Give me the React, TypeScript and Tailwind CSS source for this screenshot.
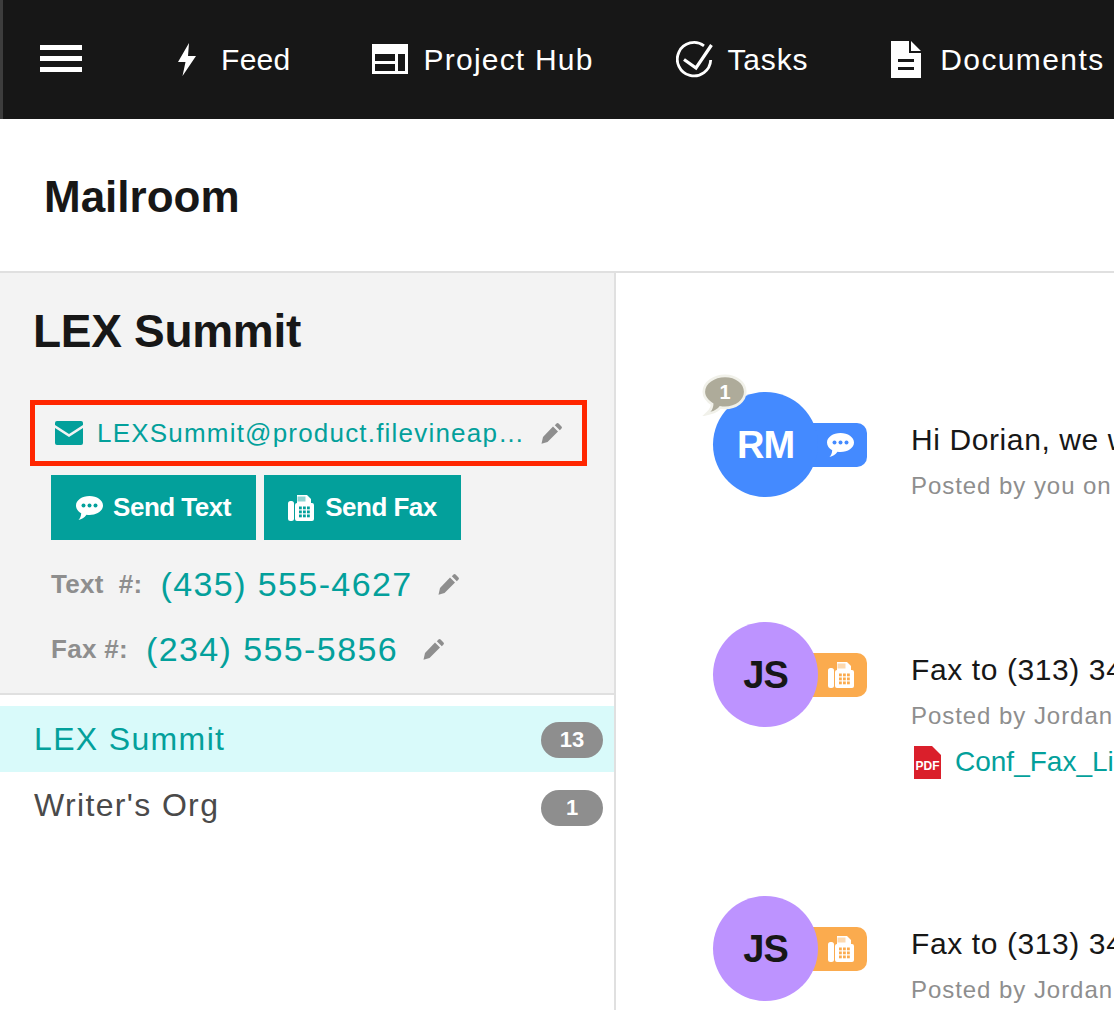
import React from 'react';

const font = { fontFamily: '"Liberation Sans", Arial, sans-serif' };

const Bolt = () => (
  <svg viewBox="0 0 20 33" className="w-[20px] h-[33px] fill-white">
    <path d="M12 0 1 19h7.500L5.500 33 19 13h-8z" />
  </svg>
);

const HubIcon = () => (
  <svg viewBox="0 0 36 30" className="w-[36px] h-[30px]">
    <path fill="#fff" fillRule="evenodd" d="M0 0h36v30H0zM3 10v7h20v-7zM3 20v7h20v-7zM26 10v17h7V10z" />
  </svg>
);

const CheckCircle = () => (
  <svg viewBox="0 0 37 37" className="w-[37px] h-[37px] fill-none stroke-white">
    <path strokeWidth="2.800" d="M28 4.800A16.700 16.700 0 1 0 34.700 19" />
    <path strokeWidth="3.200" d="M8 18.500l12 8.500L35.500 4" />
  </svg>
);

const DocIcon = () => (
  <svg viewBox="0 0 30 37" className="w-[30px] h-[37px]">
    <path fill="#fff" d="M0 0h18v12h12v25H0zM20 0l10 10H20z" />
    <path fill="#171717" d="M7 18h16v3H7zM7 26h16v3H7z" />
  </svg>
);

const MailIcon = () => (
  <svg viewBox="0 0 28 24" className="w-[28px] h-[24px] fill-[#03a09b]">
    <path d="M2 0h24a2 2 0 0 1 2 2v2L14 13 0 4V2a2 2 0 0 1 2-2z" />
    <path d="M0 7l14 9 14-9v15a2 2 0 0 1-2 2H2a2 2 0 0 1-2-2z" />
  </svg>
);

const Pencil = () => (
  <svg viewBox="0 0 22 22" className="w-[22px] h-[22px] fill-[#8e8e8e]">
    <path d="M15.500 1.500a1.500 1.500 0 0 1 2.100 0l2.900 2.900a1.500 1.500 0 0 1 0 2.100l-1.700 1.700-5-5zM12 4.500l5 5L6.500 20l-6 1.800L2 15z" />
  </svg>
);

const ChatIcon = ({ className, dot }: { className: string; dot: string }) => (
  <svg viewBox="0 0 27 24" className={className}>
    <path fill="#fff" d="M13.500 0C20.900 0 27 4.200 27 9.500S20.900 19 13.500 19c-1 0-2-.1-3-.2C8.500 21.500 5.500 23.500 2.500 24c1.500-1.500 2.500-3.700 2.700-6.800C2 15.500 0 12.700 0 9.500 0 4.200 6.100 0 13.500 0z" />
    <circle cx="7.500" cy="9.500" r="2" fill={dot} />
    <circle cx="13.500" cy="9.500" r="2" fill={dot} />
    <circle cx="19.500" cy="9.500" r="2" fill={dot} />
  </svg>
);

const FaxIcon = ({ className, hole }: { className: string; hole: string }) => (
  <svg viewBox="0 0 26 26" className={className}>
    <rect x="0" y="6" width="6" height="20" rx="2.500" fill="#fff" />
    <path fill="#fff" d="M9 0h10l4 4v4h1a2 2 0 0 1 2 2v14a2 2 0 0 1-2 2H9a2 2 0 0 1-2-2V10a2 2 0 0 1 2-2z" />
    <path fill={hole} d="M9.500 1.500h8v5h-8z" opacity="0.450" />
    {[11.500, 15.500, 19.500].map((y) =>
      [11, 15, 19].map((x) => <rect key={`${x}-${y}`} x={x} y={y} width="2.800" height="2.800" fill={hole} />),
    )}
  </svg>
);

const NavItem = ({ icon, label, gap, left, spacing }: { icon: React.ReactNode; label: string; gap: string; left: string; spacing: string }) => (
  <div className={`flex items-center ${left} ${gap}`}>
    {icon}
    <span className={`text-[30px] text-white leading-none whitespace-nowrap mt-[2px] ${spacing}`}>{label}</span>
  </div>
);

const Avatar = ({ initials, circle, tag, text, icon }: { initials: string; circle: string; tag: string; text: string; icon: React.ReactNode }) => (
  <div className="relative flex items-start shrink-0 w-[154px] h-[106px]">
    <div className={`absolute left-[90px] top-[31px] w-[64px] h-[44px] rounded-[10px] flex items-center justify-end pr-[13px] ${tag}`}>
      {icon}
    </div>
    <div className={`relative w-[105px] h-[105px] pt-[2px] rounded-full flex items-center justify-center text-[38px] font-bold tracking-[-1px] ${circle} ${text}`}>
      {initials}
    </div>
  </div>
);

const Message = ({ avatar, title, sub, file, top }: { avatar: React.ReactNode; title: string; sub: string; file?: string; top: string }) => (
  <div className={`flex ${top} relative`}>
    {avatar}
    <div className="ml-[44px] pt-[29px] whitespace-nowrap">
      <div className="text-[30px] leading-[38px] text-[#171717] tracking-[0.600px]">{title}</div>
      <div className="mt-[12px] text-[24px] leading-[30px] text-[#8e8e8e] tracking-[0.950px]">{sub}</div>
      {file && (
        <div className="mt-[14px] flex items-center gap-[14px] pl-[3px]">
          <svg viewBox="0 0 27 33" className="w-[27px] h-[33px]">
            <path fill="#da1f2b" d="M0 0h18l9 9v24H0z" />
            <text x="13.500" y="24" textAnchor="middle" fontSize="12" fontWeight="700" fill="#fff" fontFamily="Liberation Sans">PDF</text>
          </svg>
          <span className="text-[28px] leading-[34px] text-[#03a09b]">{file}</span>
        </div>
      )}
    </div>
  </div>
);

const PhoneRow = ({ label, number, mt }: { label: string; number: string; mt: string }) => (
  <div className={`flex items-center pl-[51px] gap-[18px] ${mt}`}>
    <span className="text-[26px] font-bold text-[#8e8e8e] leading-none whitespace-pre tracking-[0.300px]">{label}</span>
    <span className="text-[34px] text-[#03a09b] leading-none tracking-[1.400px] mr-[7px]">{number}</span>
    <Pencil />
  </div>
);

const OrgRow = ({ name, count, active }: { name: string; count: number; active?: boolean }) => (
  <div className={`flex items-center justify-between h-[66px] pl-[34px] pr-[11px] ${active ? 'bg-[#d9fafa] text-[#03a09b]' : 'text-[#4a4a4a]'}`}>
    <span className="text-[32px] tracking-[1.350px] leading-none">{name}</span>
    <span className={`w-[62px] h-[36px] rounded-full bg-[#8e8e8e] text-white font-bold text-[22px] flex items-center justify-center ${active ? 'mt-[1px]' : 'mt-[5px]'}`}>{count}</span>
  </div>
);

export default function App() {
  return (
    <div style={font} className="w-[1114px] h-[1010px] overflow-hidden bg-white flex flex-col">
      <nav className="h-[119px] shrink-0 bg-[#171717] border-l-[3px] border-[#3d3d3d] flex items-center pl-[37px] pb-[1px] overflow-hidden">
        <div className="w-[42px] h-[27px] flex flex-col justify-between shrink-0 -mt-[1px]">
          <div className="h-[5px] bg-white" />
          <div className="h-[5px] bg-white" />
          <div className="h-[5px] bg-white" />
        </div>
        <NavItem icon={<Bolt />} label="Feed" gap="gap-[24px]" left="ml-[95px]" spacing="tracking-[0.300px]" />
        <NavItem icon={<HubIcon />} label="Project Hub" gap="gap-[16px]" left="ml-[81px]" spacing="tracking-[1.200px]" />
        <NavItem icon={<CheckCircle />} label="Tasks" gap="gap-[15px]" left="ml-[82px]" spacing="tracking-[0.800px]" />
        <NavItem icon={<DocIcon />} label="Documents" gap="gap-[19px]" left="ml-[83px]" spacing="tracking-[1.400px]" />
      </nav>

      <header className="h-[154px] shrink-0 border-b-2 border-[#e0e0e0] flex items-center pl-[44px] pt-[4px]">
        <h1 className="text-[44px] font-bold text-[#171717] leading-none">Mailroom</h1>
      </header>

      <div className="flex flex-1 min-h-0">
        <aside className="w-[616px] shrink-0 border-r-2 border-[#e0e0e0]">
          <div className="h-[422px] bg-[#f3f3f3] border-b-2 border-[#e0e0e0] pt-[32px]">
            <h2 className="pl-[33px] text-[46px] font-bold leading-[52px] tracking-[-0.300px] text-[#171717]">LEX Summit</h2>
            <div className="ml-[30px] mt-[43px] w-[557px] h-[66px] border-[5px] border-[#ff2600] flex items-center pl-[20px]">
              <MailIcon />
              <span className="ml-[14px] w-[430px] truncate text-[26px] tracking-[1.200px] text-[#03a09b]">LEXSummit@product.filevineapp.com</span>
              <div className="ml-[14px]"><Pencil /></div>
            </div>
            <div className="flex gap-[8px] pl-[51px] mt-[9px]">
              <button className="w-[205px] h-[65px] bg-[#03a09b] text-white flex items-center justify-center gap-[10px] text-[26px] font-bold tracking-[-0.500px]">
                <ChatIcon className="w-[27px] h-[24px]" dot="#03a09b" />
                Send Text
              </button>
              <button className="w-[197px] h-[65px] bg-[#03a09b] text-white flex items-center justify-center gap-[11px] text-[26px] font-bold tracking-[-0.500px]">
                <FaxIcon className="w-[26px] h-[26px]" hole="#03a09b" />
                Send Fax
              </button>
            </div>
            <PhoneRow label="Text  #:" number="(435) 555-4627" mt="mt-[27px]" />
            <PhoneRow label="Fax #:" number="(234) 555-5856" mt="mt-[31px]" />
          </div>
          <div className="pt-[11px]">
            <OrgRow name="LEX Summit" count={13} active />
            <OrgRow name="Writer's Org" count={1} />
          </div>
        </aside>

        <main className="flex-1 min-w-0 overflow-hidden pl-[97px] pt-[119px]">
          <Message
            top=""
            title="Hi Dorian, we will be there"
            sub="Posted by you on Tuesday"
            avatar={
              <div className="relative">
                <Avatar
                  initials="RM"
                  circle="bg-[#448aff]"
                  tag="bg-[#448aff]"
                  text="text-white"
                  icon={<ChatIcon className="w-[27px] h-[24px]" dot="#448aff" />}
                />
                <div className="absolute -left-[13px] -top-[18px] w-[48px] h-[42px]">
                  <svg viewBox="0 0 44 40" className="w-[48px] h-[42px]">
                    <path fill="#aeab9a" stroke="#f1f1ea" strokeWidth="5" paintOrder="stroke" d="M23 3c10 0 18 6 18 14s-8 14-18 14c-2 0-3 0-5-.6-2 2.600-5 4.600-9 5.600 2-2 3-5 3-8-4.500-2.500-8-6.500-8-11C4 9 13 3 23 3z" />
                    <text x="23" y="24" textAnchor="middle" fontSize="19" fontWeight="700" fill="#fff" fontFamily="Liberation Sans">1</text>
                  </svg>
                </div>
              </div>
            }
          />
          <Message
            top="mt-[121px]"
            title="Fax to (313) 345-0199"
            sub="Posted by Jordan Smith"
            file="Conf_Fax_List.pdf"
            avatar={
              <Avatar
                initials="JS"
                circle="bg-[#bd93ff]"
                tag="bg-[#fbab4e]"
                text="text-[#171717]"
                icon={<FaxIcon className="w-[26px] h-[26px]" hole="#fbab4e" />}
              />
            }
          />
          <Message
            top="mt-[117px]"
            title="Fax to (313) 345-0199"
            sub="Posted by Jordan Smith"
            avatar={
              <Avatar
                initials="JS"
                circle="bg-[#bd93ff]"
                tag="bg-[#fbab4e]"
                text="text-[#171717]"
                icon={<FaxIcon className="w-[26px] h-[26px]" hole="#fbab4e" />}
              />
            }
          />
        </main>
      </div>
    </div>
  );
}
